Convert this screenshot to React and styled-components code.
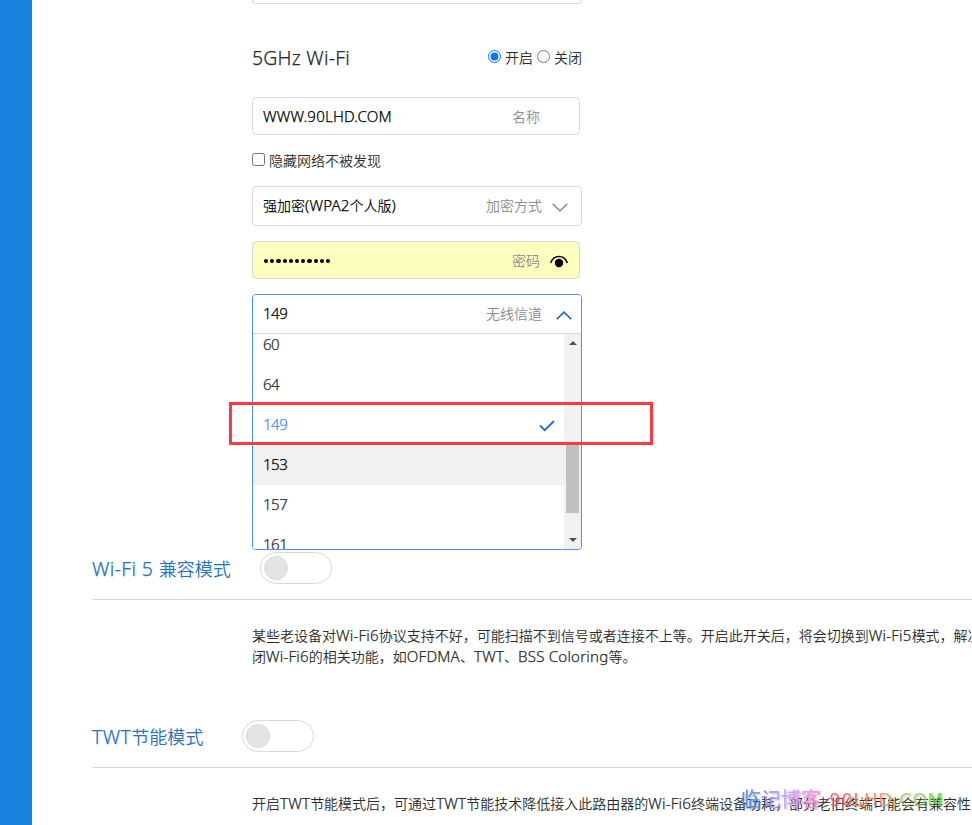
import React, { useState } from 'react';
import styled, { createGlobalStyle } from 'styled-components';

const GlobalStyle = createGlobalStyle`
  * {
    box-sizing: border-box;
  }

  body {
    margin: 0;
    overflow: hidden;
    background: #fff;
    color: #2b2b2b;
    font-family: 'Noto Sans', 'Noto Sans CJK SC', sans-serif;
    font-size: 14px;
    font-weight: 350;
    line-height: 21px;
  }
`;

const Page = styled.div`
  display: flex;
  position: relative;
  width: 972px;
  height: 825px;
  overflow: hidden;
`;

const Sidebar = styled.div`
  flex: 0 0 32px;
  background: #1782de;
`;

const Content = styled.main`
  flex: 1;
  min-width: 0;
  padding-left: 60px;
`;

const Form = styled.div`
  width: 330px;
  height: 552px;
  margin-left: 160px;
`;

const PreviousField = styled.div`
  height: 4px;
  border: 1px solid #d9d9d9;
  border-top: 0;
  border-radius: 0 0 4px 4px;
`;

const BandHeader = styled.div`
  display: flex;
  justify-content: space-between;
  height: 93px;
  padding-top: 41px;
`;

const BandTitle = styled.h3`
  margin: 0;
  font-size: 18px;
  font-weight: 350;
  line-height: 26px;
`;

const RadioGroup = styled.div`
  display: flex;
  gap: 4px;
  padding-top: 2px;
`;

const Choice = styled.label`
  display: flex;
  gap: 4px;

  input {
    width: 13px;
    height: 13px;
    margin: 3px 0 0;
  }
`;

const Field = styled.div`
  display: flex;
  align-items: center;
  width: ${props => (props.$select ? '330px' : '328px')};
  height: ${props => (props.$select ? '40px' : '38px')};
  padding: 0 ${props => (props.$select ? '13px 2px' : '11px 0')} 10px;
  border: 1px solid #d9d9d9;
  border-radius: 4px;
  background: ${props => (props.$filled ? '#faffbd' : '#fff')};
  color: #000;
`;

const Value = styled.span`
  flex: 1;
`;

const Hint = styled.span`
  color: #8c8c8c;
`;

const IconSlot = styled.span`
  display: flex;
  justify-content: flex-end;
  width: ${props => props.$width || '28px'};
  padding-top: ${props => props.$drop || '2px'};
`;

const Dots = styled.span`
  display: flex;
  flex: 1;
  gap: 2px;
  padding: 2px 0 0 1px;

  i {
    width: 4.2px;
    height: 4.2px;
    border-radius: 50%;
    background: #000;
  }
`;

const HiddenNetwork = styled(Choice)`
  height: 51px;
  padding-top: 15px;
`;

const PasswordRow = styled.div`
  padding: 15px 0;
`;

const Dropdown = styled.div`
  height: 256px;
  border: 1px solid #4a92f0;
  border-radius: 4px;
  overflow: hidden;
`;

const DropdownHead = styled(Field)`
  width: 328px;
  height: 39px;
  padding: 0 9px 2px 10px;
  border: 0;
  border-bottom: 1px solid #d9d9d9;
  border-radius: 0;
`;

const DropdownBody = styled.div`
  display: flex;
  height: 215px;
  overflow: hidden;
`;

const Options = styled.div`
  flex: 1;
  margin-top: -9px;
`;

const Option = styled.div`
  display: flex;
  align-items: center;
  justify-content: space-between;
  height: 40px;
  padding: 0 9px 0 10px;
  background: ${props => (props.$hover ? '#f1f1f1' : '#fff')};
  color: ${props => (props.$selected ? '#4a8df5' : props.$hover ? '#000' : '#2b2b2b')};
  cursor: pointer;

  svg {
    margin-top: 1px;
  }
`;

const Scrollbar = styled.div`
  display: flex;
  flex-direction: column;
  align-items: center;
  width: 17px;
  padding: 7px 0 7px 0;
  background: #f1f1f1;

  svg:last-child {
    margin-top: auto;
  }
`;

const Thumb = styled.div`
  width: 13px;
  height: 69px;
  margin-top: 99px;
  background: #c1c1c1;
`;

const Section = styled.section`
  height: 168px;
`;

const SectionHead = styled.div`
  display: flex;
  align-items: center;
  height: 48px;
  padding-bottom: 15px;
  border-bottom: 1px solid #d9d9d9;
`;

const SectionTitle = styled.h2`
  width: ${props => props.$width};
  margin: 0;
  padding-top: 2px;
  color: #2472c2;
  font-size: 18px;
  font-weight: 350;
  white-space: nowrap;
`;

const Switch = styled.button`
  display: flex;
  align-items: center;
  justify-content: ${props => (props.$on ? 'flex-end' : 'flex-start')};
  width: 72px;
  height: 32px;
  padding: 0 3px;
  border: 1px solid #d9d9d9;
  border-radius: 16px;
  background: #fff;
  cursor: pointer;
`;

const Knob = styled.span`
  width: 24px;
  height: 24px;
  border: 1px solid #d9d9d9;
  border-radius: 50%;
  background: #e4e4e4;
`;

const Description = styled.p`
  margin: 25px 0 0 160px;
  white-space: nowrap;
`;

// western letters are set slightly larger than the Chinese text around them
const Latin = styled.span`
  font-size: 1.075em;
  line-height: 1;
  letter-spacing: ${props => props.$spacing || '0.2px'};
  -webkit-text-stroke: 0.25px currentColor;
`;

// red frame laid over the selected channel
const Highlight = styled.div`
  position: absolute;
  top: 402px;
  left: 229px;
  width: 424px;
  height: 43px;
  border: 3px solid #fa3a3c;
  pointer-events: none;
`;

const Watermark = styled.div`
  position: absolute;
  top: 787px;
  left: 741px;
  display: flex;
  gap: 8px;
  background: linear-gradient(90deg, #3f83d8, #c39aff 22%, #ff7fd0 38%, #f5454f 48%, #ff8d55 68%, #b9c45b 83%, #35ec2a);
  background-clip: text;
  color: transparent;
  font-size: 20px;
  font-weight: 500;
  line-height: 26px;
  white-space: nowrap;
  opacity: 0.85;
  filter: drop-shadow(1px 1px 1px rgba(0, 0, 0, 0.3));
  pointer-events: none;

  span:last-child {
    font-family: 'DejaVu Sans', sans-serif;
    font-size: 18px;
    letter-spacing: 0.7px;
  }
`;

const Chevron = ({ up }) => (
  <svg width="16" height="9" viewBox="0 0 16 9" fill="none" stroke={up ? '#2874c6' : '#999'} strokeWidth="1.8">
    <path d={up ? 'M.8 8.2 8 1.2l7.2 7' : 'M.8.8 8 7.8l7.2-7'} />
  </svg>
);

const Eye = () => (
  <svg width="18" height="13" viewBox="0 0 18 13">
    <path d="M.7 8C2.3 3.3 5.4 1.500 9 1.500s6.700 1.800 8.300 6.500" fill="none" stroke="#000" strokeWidth="1.500" />
    <circle cx="9" cy="8" r="4.200" fill="#000" />
  </svg>
);

const Check = () => (
  <svg width="16" height="12" viewBox="0 0 16 12" fill="none" stroke="#2874c6" strokeWidth="2">
    <path d="M1 5.500 5.800 10.200 15 1" />
  </svg>
);

const Arrow = ({ down }) => (
  <svg width="8" height="4" viewBox="0 0 8 4" fill="#505050">
    <path d={down ? 'M0 0h8L4 4z' : 'M0 4h8L4 0z'} />
  </svg>
);

const channels = ['60', '64', '149', '153', '157', '161'];

const App = () => {
  const [enabled, setEnabled] = useState(true);
  const [hidden, setHidden] = useState(false);
  const [channel, setChannel] = useState('149');
  const [compat, setCompat] = useState(false);
  const [twt, setTwt] = useState(false);

  return (
    <Page>
      <GlobalStyle />
      <Sidebar />
      <Content>
        <Form>
          <PreviousField />
          <BandHeader>
            <BandTitle><Latin $spacing="0.25px">5GHz Wi-Fi</Latin></BandTitle>
            <RadioGroup>
              <Choice>
                <input type="radio" name="band" checked={enabled} onChange={() => setEnabled(true)} />
                开启
              </Choice>
              <Choice>
                <input type="radio" name="band" checked={!enabled} onChange={() => setEnabled(false)} />
                关闭
              </Choice>
            </RadioGroup>
          </BandHeader>

          <Field>
            <Value><Latin>WWW.90LHD.COM</Latin></Value>
            <Hint>名称</Hint>
            <IconSlot />
          </Field>

          <HiddenNetwork>
            <input type="checkbox" checked={hidden} onChange={() => setHidden(!hidden)} />
            隐藏网络不被发现
          </HiddenNetwork>

          <Field $select>
            <Value>强加密<Latin>(WPA2</Latin>个人版<Latin>)</Latin></Value>
            <Hint>加密方式</Hint>
            <IconSlot $width="26px" $drop="4px"><Chevron /></IconSlot>
          </Field>

          <PasswordRow>
            <Field $filled>
              <Dots>
                {[...Array(11)].map((_, index) => <i key={index} />)}
              </Dots>
              <Hint>密码</Hint>
              <IconSlot><Eye /></IconSlot>
            </Field>
          </PasswordRow>

          <Dropdown>
            <DropdownHead>
              <Value><Latin $spacing="-0.5px">{channel}</Latin></Value>
              <Hint>无线信道</Hint>
              <IconSlot $width="30px" $drop="4px"><Chevron up /></IconSlot>
            </DropdownHead>
            <DropdownBody>
              <Options>
                {channels.map(item => (
                  <Option
                    key={item}
                    $selected={item === channel}
                    $hover={item === '153'}
                    onClick={() => setChannel(item)}
                  >
                    <Latin $spacing="-0.5px">{item}</Latin>
                    {item === channel && <Check />}
                  </Option>
                ))}
              </Options>
              <Scrollbar>
                <Arrow />
                <Thumb />
                <Arrow down />
              </Scrollbar>
            </DropdownBody>
          </Dropdown>
        </Form>

        <Section>
          <SectionHead>
            <SectionTitle $width="168px"><Latin $spacing="0.4px">Wi-Fi 5 </Latin>兼容模式</SectionTitle>
            <Switch $on={compat} onClick={() => setCompat(!compat)}><Knob /></Switch>
          </SectionHead>
          <Description>
            某些老设备对<Latin>Wi-Fi6</Latin>协议支持不好，可能扫描不到信号或者连接不上等。开启此开关后，将会切换到<Latin>Wi-Fi5</Latin>模式，解决
            <br />
            闭<Latin>Wi-Fi6</Latin>的相关功能，如<Latin>OFDMA</Latin>、<Latin>TWT</Latin>、<Latin>BSS Coloring</Latin>等。
          </Description>
        </Section>

        <Section>
          <SectionHead>
            <SectionTitle $width="150px"><Latin $spacing="0.4px">TWT</Latin>节能模式</SectionTitle>
            <Switch $on={twt} onClick={() => setTwt(!twt)}><Knob /></Switch>
          </SectionHead>
          <Description>
            开启<Latin>TWT</Latin>节能模式后，可通过<Latin>TWT</Latin>节能技术降低接入此路由器的<Latin>Wi-Fi6</Latin>终端设备功耗，部分老旧终端可能会有兼容性
          </Description>
        </Section>
      </Content>
      <Highlight />
      <Watermark>
        <span>临记博客</span>
        <span>90LHD.COM</span>
      </Watermark>
    </Page>
  );
};

export default App;
